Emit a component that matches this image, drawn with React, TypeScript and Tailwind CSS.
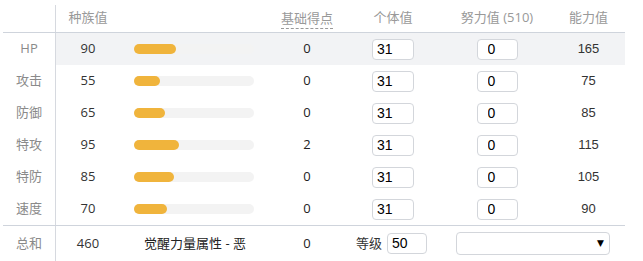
import React from 'react';

type Stat = {
  label: string;
  base: number;
  pts: number;
  iv: number;
  ev: number;
  value: number;
};

const stats: Stat[] = [
  { label: 'HP', base: 90, pts: 0, iv: 31, ev: 0, value: 165 },
  { label: '攻击', base: 55, pts: 0, iv: 31, ev: 0, value: 75 },
  { label: '防御', base: 65, pts: 0, iv: 31, ev: 0, value: 85 },
  { label: '特攻', base: 95, pts: 2, iv: 31, ev: 0, value: 115 },
  { label: '特防', base: 85, pts: 0, iv: 31, ev: 0, value: 105 },
  { label: '速度', base: 70, pts: 0, iv: 31, ev: 0, value: 90 },
];

const cjk = "font-['Open_Sans','Noto_Sans_CJK_SC',sans-serif]";

function NumInput({ value, pad = 'pl-[4px]', w = 'w-[42px]' }: { value: number; pad?: string; w?: string }) {
  return (
    <input
      readOnly
      value={value}
      className={`${w} ${pad} h-[21px] rounded-[4px] border border-[#d3d6db] bg-white text-[14px] text-black outline-none font-['Liberation_Sans',sans-serif]`}
    />
  );
}

export default function App() {
  return (
    <div className={`w-[643px] h-[261px] bg-white pl-[3px] text-[13px] ${cjk}`}>
      <div className="w-[622px]">
        {/* header */}
        <div className="flex h-[33px] border-b border-[#cfd4dc] text-[#999]">
          <div className="w-[53px] mt-[5px] border-r border-[#d6d9df]" />
          <div className="w-[64px] flex items-center justify-center pt-[4px]">种族值</div>
          <div className="w-[150px]" />
          <div className="w-[74px] flex items-center justify-center pt-[5px]">
            <span className="border-b border-dashed border-[#999] leading-[18px] pb-[1px]">基础得点</span>
          </div>
          <div className="w-[98px] flex items-center justify-center pt-[4px]">个体值</div>
          <div className="w-[110px] flex items-center justify-center pt-[4px]">努力值 (510)</div>
          <div className="w-[73px] flex items-center justify-center pt-[4px]">能力值</div>
        </div>

        {stats.map((s, i) => (
          <div key={s.label} className={`flex h-[32px] ${i === 5 ? 'border-b border-[#cfd4dc] h-[33px]' : ''}`}>
            <div className="w-[53px] border-r border-[#d6d9df] flex items-center justify-center text-[#8a8a8a]">
              {s.label}
            </div>
            <div className={`flex flex-1 items-center ${i === 0 ? 'bg-[#f2f3f5]' : ''}`}>
              <div className="w-[64px] text-center text-[#333]">{s.base}</div>
              <div className="w-[150px] pl-[14px]">
                <div className="w-[120px] h-[10px] rounded-full bg-[#f3f3f3]">
                  <div
                    className="h-[10px] rounded-full bg-[#f0b43c]"
                    style={{ width: `${Math.round((s.base / 255) * 120)}px` }}
                  />
                </div>
              </div>
              <div className="w-[74px] text-center text-[#222]">{s.pts}</div>
              <div className="w-[98px] flex justify-center">
                <NumInput value={s.iv} />
              </div>
              <div className="w-[110px] flex justify-center">
                <NumInput value={s.ev} pad="pl-[10px]" w="w-[41px]" />
              </div>
              <div className="w-[73px] text-center text-[#333] font-['Liberation_Sans',sans-serif]">{s.value}</div>
            </div>
          </div>
        ))}

        {/* total */}
        <div className="flex h-[35px] items-stretch">
          <div className="w-[53px] border-r border-[#d6d9df] flex items-center justify-center text-[#8a8a8a]">总和</div>
          <div className="w-[64px] flex items-center justify-center text-[#333]">460</div>
          <div className="w-[150px] flex items-center justify-center text-[#222]">觉醒力量属性 - 恶</div>
          <div className="w-[74px] flex items-center justify-center text-[#222]">0</div>
          <div className="w-[98px] flex items-center justify-end pr-[15px] gap-[5px] text-[#333]">
            <span>等级</span>
            <NumInput value={50} w="w-[40px]" />
          </div>
          <div className="flex-1 flex items-center pl-[14px]">
            <div className="w-[154px] h-[23px] rounded-[4px] border border-[#d3d6db] bg-white flex items-center justify-end pr-[5px]">
              <span className="text-[9px] text-black font-['DejaVu_Sans',sans-serif]">▼</span>
            </div>
          </div>
        </div>
      </div>
    </div>
  );
}
